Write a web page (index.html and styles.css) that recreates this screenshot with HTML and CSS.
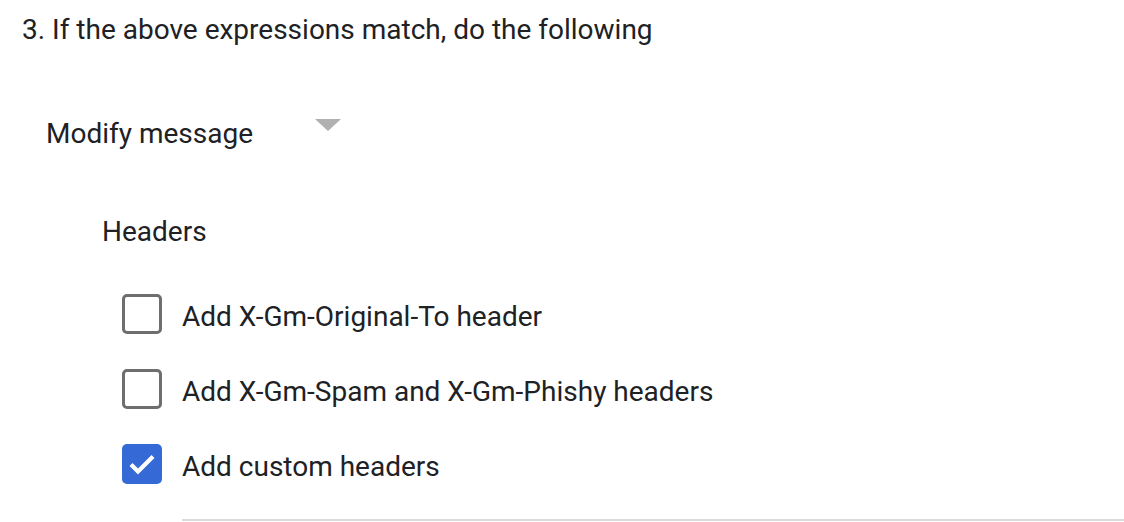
FILE: index.html
```html
<!DOCTYPE html>
<html lang="en">
<head>
  <meta charset="UTF-8">
  <title>Modify message</title>
  <link rel="stylesheet" href="styles.css">
</head>
<body>
  <div class="rule-step">
    <div class="step-title">3. If the above expressions match, do the following</div>

    <div class="action-select">
      <span class="action-label">Modify message</span>
      <span class="dropdown-arrow"></span>
    </div>

    <div class="headers-section">
      <div class="section-title">Headers</div>

      <label class="check-row">
        <span class="checkbox"></span>
        <span class="check-text">Add X-Gm-Original-To header</span>
      </label>
      <label class="check-row">
        <span class="checkbox"></span>
        <span class="check-text">Add X-Gm-Spam and X-Gm-Phishy headers</span>
      </label>
      <label class="check-row">
        <span class="checkbox checked">
          <svg viewBox="0 0 40 40" width="40" height="40"><path d="M9 20.5l7 7L31 12.5" fill="none" stroke="#fff" stroke-width="4.2"/></svg>
        </span>
        <span class="check-text">Add custom headers</span>
      </label>

      <div class="custom-headers-line"></div>
    </div>
  </div>
</body>
</html>
```

FILE: styles.css
```css
body {
  margin: 0;
  background: #fff;
  font-family: Roboto, "Noto Sans", sans-serif;
  color: #202124;
}

.rule-step {
  padding: 10px 0 0 22px;
}

.step-title {
  font-size: 28px;
  line-height: 40px;
}

.action-select {
  display: flex;
  align-items: center;
  margin: 63px 0 0 24px;
  height: 40px;
}

.action-label {
  font-size: 28px;
  width: 269px;
}

.dropdown-arrow {
  width: 0;
  height: 0;
  border-left: 13px solid transparent;
  border-right: 13px solid transparent;
  border-top: 12px solid #b0b0b0;
  margin-top: -16px;
}

.headers-section {
  margin: 59px 0 0 80px;
}

.section-title {
  font-size: 28px;
  line-height: 40px;
  margin-bottom: 42px;
}

.check-row {
  display: flex;
  align-items: center;
  gap: 20px;
  height: 40px;
  margin: 0 0 35px 20px;
}

.checkbox {
  box-sizing: border-box;
  width: 40px;
  height: 40px;
  border: 3.5px solid #6e6e6e;
  border-radius: 5px;
  display: flex;
  align-items: center;
  justify-content: center;
}

.checkbox.checked {
  background: #3469d6;
  border: 0;
}

.check-text {
  font-size: 28px;
  padding-top: 4px;
}

.custom-headers-line {
  margin-left: 80px;
  height: 2px;
  background: #dadce0;
}
```
